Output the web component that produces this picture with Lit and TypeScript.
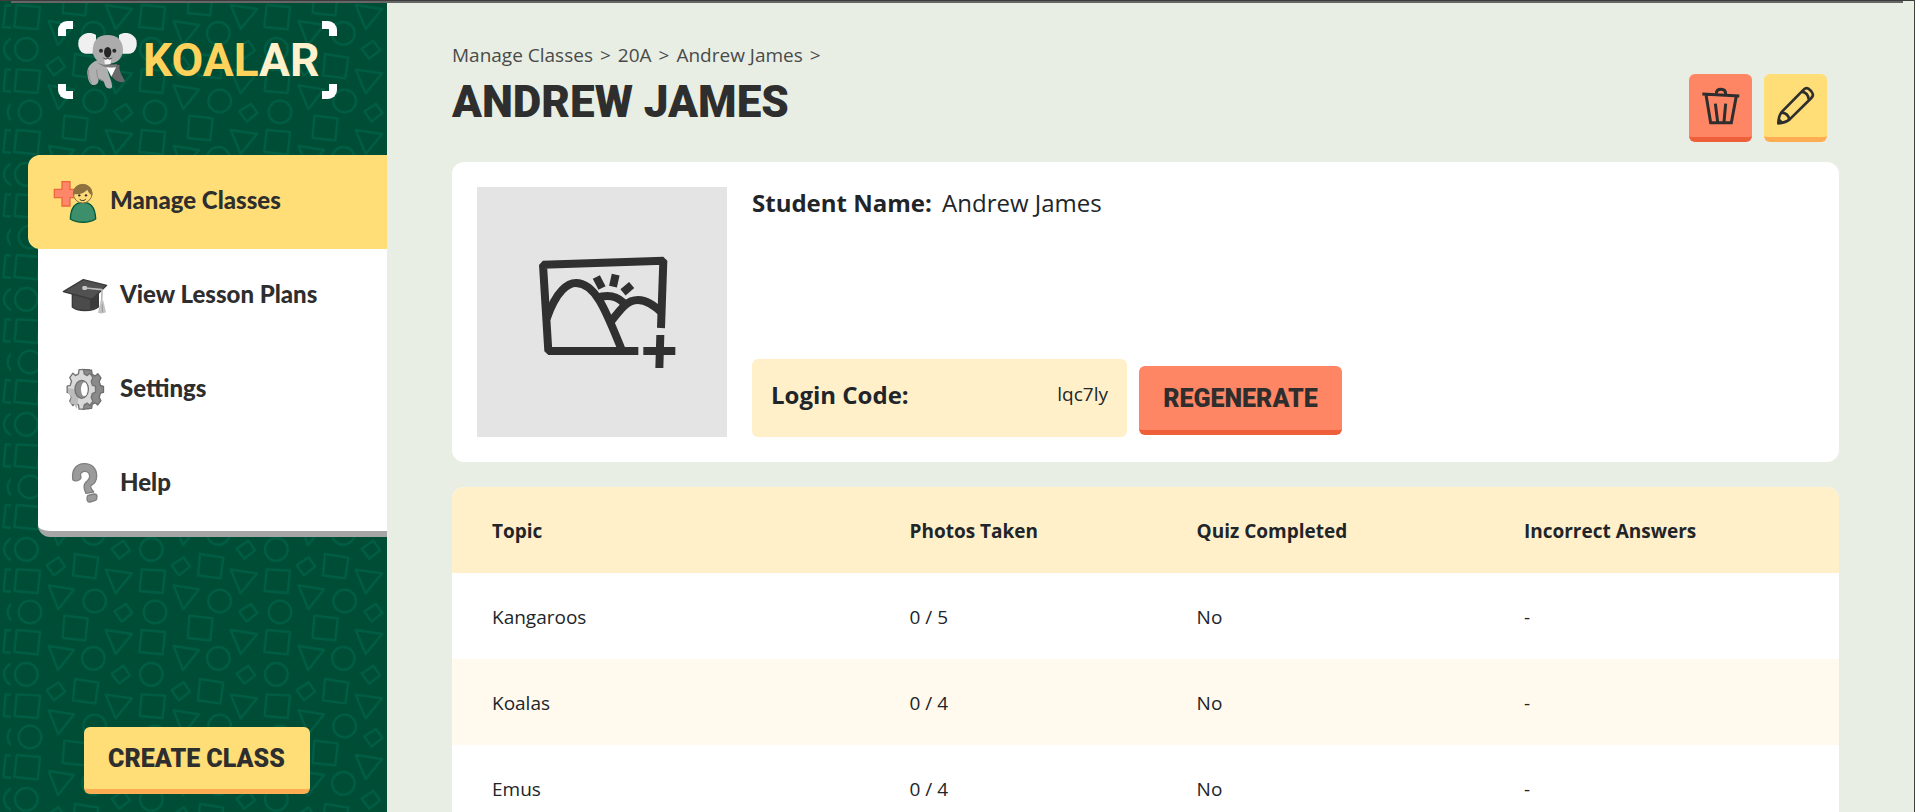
import { LitElement, html, css, svg } from "lit";
import { customElement, property } from "lit/decorators.js";
import { classMap } from "lit/directives/class-map.js";

const ink = "#2e2e2e";

/* Outline of a toothed wheel, squashed to an ellipse to suggest perspective. */
function gearPath(cx: number, cy: number, rx: number, ry: number, teeth = 8): string {
  const steps: [number, number][] = [
    [-0.2, 1],
    [0.2, 1],
    [0.32, 0.8],
    [0.68, 0.8],
  ];
  const points: string[] = [];
  for (let i = 0; i < teeth; i++) {
    for (const [offset, radius] of steps) {
      const angle = ((i + offset) / teeth) * Math.PI * 2;
      const x = cx + Math.sin(angle) * rx * radius;
      const y = cy - Math.cos(angle) * ry * radius;
      points.push(`${x.toFixed(1)} ${y.toFixed(1)}`);
    }
  }
  return `M${points.join("L")}Z`;
}

const classesIcon = svg`<svg class="icon" viewBox="0 0 180 180" aria-hidden="true">
  <path d="M42 35h24v23h26v25H66v25H42V83H19V58h23z" fill="#ff8769" stroke="#f0663f" stroke-width="4"/>
  <path d="M67 147C68 116 80 97 105 97s37 19 38 50c-20 13-56 13-76 0z" fill="#3d8f6b" stroke="#005a3c" stroke-width="4" stroke-linejoin="round"/>
  <circle cx="104" cy="71" r="28" fill="#ffdb78" stroke="#8f7140" stroke-width="3"/>
  <path d="M76 76C74 54 87 43 104 43s31 11 29 33c-7-3-12-8-15-17-9 9-23 15-34 14-4 0-6 1-8 3z" fill="#8f7140"/>
  <circle cx="94" cy="76" r="3.5" fill="${ink}"/><circle cx="114" cy="76" r="3.5" fill="${ink}"/>
  <path d="M95 88c5 5 13 5 18 0" fill="none" stroke="${ink}" stroke-width="3"/>
</svg>`;

const lessonsIcon = svg`<svg class="icon" viewBox="6 -18 180 180" aria-hidden="true">
  <path d="M49 72v39c14 14 62 14 78 0V72z" fill="#4b4b4b" stroke="#393939" stroke-width="4" stroke-linejoin="round"/>
  <path d="M102 87l24-8v31l-24 9z" fill="#3b3b3b"/>
  <path d="M22 65L82 29l70 17-43 42z" fill="#515151" stroke="#393939" stroke-width="4" stroke-linejoin="round"/>
  <path d="M88 54l50 5-1 38" fill="none" stroke="#b9b9b9" stroke-width="5" stroke-linejoin="round"/>
  <rect x="79" y="48" width="14" height="12" rx="4" fill="#c7c7c7"/>
  <path d="M134 92h8l8 35c-7 4-18 4-24 1z" fill="#c2c2c2"/>
  <path d="M139 103v24" stroke="#999" stroke-width="3"/>
</svg>`;

const settingsIcon = svg`<svg class="icon" viewBox="6 264 180 180" aria-hidden="true">
  <path d="${gearPath(100, 358, 43, 58)}" fill="#8a8a8a" stroke="#6d6d6d" stroke-width="4" stroke-linejoin="round"/>
  <path d="M78 298l24 2v116l-24 2z" fill="#8a8a8a"/>
  <path d="M78 298l24 2M78 418l24-2" stroke="#6d6d6d" stroke-width="4"/>
  <path d="${gearPath(76, 358, 43, 60)}" fill="#d9d9d9" stroke="#737373" stroke-width="4" stroke-linejoin="round"/>
  <path d="M70 359l-34-4v14l11 12-5 20 12 1 9 15z" fill="#bcbcbc"/>
  <ellipse cx="77" cy="358" rx="20" ry="27" fill="#8f8f8f" stroke="#707070" stroke-width="4"/>
  <ellipse cx="85" cy="358" rx="10" ry="21" fill="#fff"/>
</svg>`;

const helpIcon = svg`<svg class="icon" viewBox="6 546 180 180" aria-hidden="true">
  <g fill="#9b9b9b" stroke="#7f7f7f" stroke-width="4" stroke-linejoin="round">
    <path d="M50 627c-3-30 12-45 34-46 24-1 38 15 38 37 0 17-6 23-17 29-4 3 3 12 8 19l-23 4c-7-14-8-26 0-34 7-7 12-8 11-18-1-9-8-15-17-14-9 2-13 8-9 17 1 6-10 14-20 11-4-1-5-3-5-5z"/>
    <path d="M96 676l18-4c8 0 9 4 9 8s0 9-5 11l-16 5c-7 1-9-5-9-9s0-9 3-11z"/>
  </g>
</svg>`;

const koala = svg`<svg class="koala" viewBox="0 0 210 198" aria-hidden="true">
  <path d="M20 40C27 20 52 12 72 24v53c-18 5-35 5-44-2-9-10-11-22-8-35z" fill="#f0f0f0"/>
  <path d="M193 40c-7-20-32-28-52-16v53c18 5 35 5 44-2 9-10 11-22 8-35z" fill="#f0f0f0"/>
  <path d="M103 110l40 4c-4 16 8 34 16 48-10 8-26 4-40-14z" fill="#6a6a6a"/>
  <path d="M76 100c-26 10-33 28-29 46 2 16 8 29 20 28 11-1 14-10 12-20l16 9 5 14c4 9 18 10 20 3 1-14-8-30-12-46l-6-34z" fill="#afafaf"/>
  <path d="M74 128c2 14 0 22 6 28l15 7M50 128c-2 16 2 30 9 40" fill="none" stroke="#8c8c8c" stroke-width="3"/>
  <path d="M103 120l29 1-14 28z" fill="#fff"/>
  <path d="M74 106c20 10 41 12 62 4l-6 10c-20 4-38 1-56-14z" fill="#7c7c7c"/>
  <path d="M62 76C61 40 78 24 107 24s47 16 46 50c-5 23-20 36-46 36S66 98 62 76z" fill="#acacac"/>
  <path d="M97 96h20l-1 14c-5 3-12 3-18 0z" fill="#f4f4f4"/>
  <ellipse cx="107" cy="76" rx="11" ry="16" fill="#252525"/>
  <circle cx="87" cy="71" r="6" fill="#2a2a2a"/><circle cx="127" cy="71" r="6" fill="#2a2a2a"/>
  <path d="M94 92c4 6 10 6 13 1 3 5 9 5 13-1" fill="none" stroke="#333" stroke-width="3"/>
</svg>`;

const trashIcon = svg`<svg class="glyph" viewBox="302 256 120 120" aria-hidden="true">
  <g fill="none" stroke="${ink}" stroke-width="9">
    <path d="M306 280l111 6M317 282l14 84h62l15-80"/>
    <path d="M348 279c0-8 5-13 14-13s14 6 14 14M345 309l7 55M376 309l-5 55"/>
  </g>
</svg>`;

const pencilIcon = svg`<svg class="glyph" viewBox="527 256 120 120" aria-hidden="true">
  <g fill="none" stroke="${ink}" stroke-width="8" stroke-linejoin="round">
    <path d="M534 368c0-14 2-24 11-35l65-66c4-4 9-6 14-3 6 4 11 9 13 15 2 5 0 9-4 13l-65 64c-9 7-20 11-34 12z"/>
    <path d="M604 273c12 2 20 11 21 23M544 336c12 1 21 9 23 21"/>
    <path d="M536 356c6 1 9 5 10 10l-12 2z" fill="${ink}" stroke-width="3"/>
  </g>
</svg>`;

const pictureIcon = svg`<svg class="picture" viewBox="111 111 750 750" role="img" aria-label="Add student photo">
  <g fill="none" stroke="#303030" stroke-width="24">
    <path stroke-linejoin="bevel" d="M663 534L670 332 309 344 325 603H595"/>
    <path d="M320 506C350 420 385 399 408 399c60 0 92 90 137 200"/>
    <path d="M510 518c35-45 52-68 84-68 25 0 46 14 73 39M468 444c30-10 58-10 82 14"/>
    <path d="M469 381l17 33M527 374l-8 36M575 405l-26 22M661 555l-3 99M610 603h96"/>
  </g>
</svg>`;

interface NavItem {
  label: string;
  icon: unknown;
  active?: boolean;
}

const navItems: NavItem[] = [
  { label: "Manage Classes", icon: classesIcon, active: true },
  { label: "View Lesson Plans", icon: lessonsIcon },
  { label: "Settings", icon: settingsIcon },
  { label: "Help", icon: helpIcon },
];

interface TopicRow {
  topic: string;
  photos: string;
  quiz: string;
  incorrect: string;
}

const topicRows: TopicRow[] = [
  { topic: "Kangaroos", photos: "0 / 5", quiz: "No", incorrect: "-" },
  { topic: "Koalas", photos: "0 / 4", quiz: "No", incorrect: "-" },
  { topic: "Emus", photos: "0 / 4", quiz: "No", incorrect: "-" },
];

const buttonStyles = css`
  button {
    margin: 0;
    border: 0;
    border-radius: 6px;
    font: 900 25px/1 Roboto, sans-serif;
    color: #2e2e2e;
    cursor: pointer;
  }
  .yellow {
    background: #ffdd77;
    border-bottom: 5px solid #ffad52;
  }
  .coral {
    background: #ff8664;
    border-bottom: 5px solid #ed6039;
  }
`;

@customElement("koalar-sidebar")
export class KoalarSidebar extends LitElement {
  static styles = [
    buttonStyles,
    css`
      :host {
        --shapes: url("data:image/svg+xml,%3Csvg xmlns='http://www.w3.org/2000/svg' width='125' height='125' viewBox='0 0 375 375'%3E%3Cg fill='none' stroke='%23005d44' stroke-width='7' stroke-linejoin='round'%3E%3Ccircle cx='46' cy='28' r='34'/%3E%3Ccircle cx='46' cy='403' r='34'/%3E%3Ccircle cx='57' cy='216' r='34'/%3E%3Ccircle cx='251' cy='183' r='34'/%3E%3Ccircle cx='247' cy='355' r='34'/%3E%3Ccircle cx='247' cy='-20' r='34'/%3E%3Cpath d='M17 88l70 4-7 67-69-6zM17 270l70 6-7 67-70-7zM192 42l70 11-9 62-67-9zM160 227l70 8-7 66-68-7zM143 52l19 28-33 26-22-30zM337 2l20 29-32 25-23-30zM337 377l20 29-32 25-23-30zM345 192l19 27-32 26-22-31zM113 136l76 12-47 60zM113 318l76 12-48 60zM113-57l76 12-48 60zM284 89l79 11-49 60zM284 270l79 12-49 60z'/%3E%3C/g%3E%3C/svg%3E");
        position: relative;
        display: flex;
        flex-direction: column;
        box-sizing: border-box;
        width: 387px;
        padding: 20px 0 18px 28px;
        background: #004d35 var(--shapes) 11px 39px;
      }
      :host::before {
        content: "";
        position: absolute;
        inset: 0 auto 0 0;
        width: 11px;
        background: #004d35 var(--shapes) 0 39px;
      }
      .logo {
        position: relative;
        display: flex;
        align-items: center;
        box-sizing: border-box;
        width: 279px;
        height: 78px;
        margin: 0 0 56px 30px;
        padding-left: 14px;
        color: #ffd25c;
        font: 700 46px/78px Roboto, sans-serif;
        text-decoration: none;
      }
      .corner {
        position: absolute;
        width: 15px;
        height: 15px;
        box-sizing: border-box;
        border: 0 solid #fff;
      }
      .tl { top: 0; left: 0; border-width: 8px 0 0 8px; border-top-left-radius: 9px; }
      .tr { top: 0; right: 0; border-width: 8px 8px 0 0; border-top-right-radius: 9px; }
      .bl { bottom: 0; left: 0; border-width: 0 0 8px 8px; border-bottom-left-radius: 9px; }
      .br { bottom: 0; right: 0; border-width: 0 8px 8px 0; border-bottom-right-radius: 9px; }
      .koala {
        width: 70px;
        height: 66px;
        margin-right: 1px;
      }
      .light {
        color: #fff1cc;
      }
      .menu {
        margin-left: 10px;
        background: #fff;
        border-bottom: 6px solid #a6a6a6;
        border-bottom-left-radius: 12px;
      }
      .item {
        display: flex;
        align-items: center;
        gap: 2px;
        box-sizing: border-box;
        height: 94px;
        padding: 0 20px 4px;
        color: #2e2e2e;
        font: 900 24px/30px Lato, sans-serif;
        text-decoration: none;
      }
      .active {
        margin-left: -10px;
        background: #ffdd77;
        border-radius: 12px 0 0 12px;
      }
      .icon {
        width: 60px;
        height: 60px;
        flex: none;
      }
      .create {
        align-self: center;
        width: 226px;
        height: 67px;
        margin: auto 22px 0 0;
      }
    `,
  ];

  render() {
    return html`
      <a class="logo" href="#" aria-label="Koalar">
        <span class="corner tl"></span><span class="corner tr"></span>
        <span class="corner bl"></span><span class="corner br"></span>
        ${koala}<span>KOAL<span class="light">AR</span></span>
      </a>
      <nav class="menu">
        ${navItems.map(
          (item) => html`<a href="#" class=${classMap({ item: true, active: !!item.active })}>
            ${item.icon}<span>${item.label}</span>
          </a>`
        )}
      </nav>
      <button class="create yellow" type="button">CREATE CLASS</button>
    `;
  }
}

@customElement("student-card")
export class StudentCard extends LitElement {
  @property() name = "";
  @property() code = "";

  static styles = [
    buttonStyles,
    css`
      :host {
        display: flex;
        gap: 25px;
        padding: 25px;
        background: #fff;
        border-radius: 12px;
        color: #212529;
      }
      .picture {
        display: block;
        width: 250px;
        height: 250px;
        flex: none;
        background: #e4e4e4;
      }
      .details {
        flex: 1;
        display: flex;
        flex-direction: column;
        justify-content: space-between;
      }
      .name {
        margin: 0;
        font-size: 24px;
        line-height: 32px;
      }
      .name strong {
        margin-right: 4px;
      }
      .login {
        display: flex;
        align-items: flex-end;
        gap: 12px;
      }
      .code {
        display: flex;
        align-items: center;
        justify-content: space-between;
        box-sizing: border-box;
        width: 375px;
        height: 78px;
        padding: 0 19px 8px;
        background: #fff0ca;
        border-radius: 6px;
        font-size: 19px;
      }
      .code strong {
        font-size: 24px;
      }
      .regenerate {
        width: 203px;
        height: 69px;
        margin-bottom: 2px;
      }
    `,
  ];

  render() {
    return html`
      ${pictureIcon}
      <div class="details">
        <p class="name"><strong>Student Name:</strong> ${this.name}</p>
        <div class="login">
          <div class="code"><strong>Login Code:</strong><span>${this.code}</span></div>
          <button class="regenerate coral" type="button">REGENERATE</button>
        </div>
      </div>
    `;
  }
}

@customElement("app-root")
export class AppRoot extends LitElement {
  static styles = [
    buttonStyles,
    css`
      :host {
        position: relative;
        display: flex;
        box-sizing: border-box;
        height: 100vh;
        overflow: hidden;
        border-top: 1px solid #3c3c3c;
        border-right: 1px solid #3c4240;
        background: #e8eee3;
        color: #212529;
        font-family: "Open Sans", "Noto Sans", sans-serif;
      }
      .edge {
        position: absolute;
        top: 0;
        left: 11px;
        right: 11px;
        height: 2px;
        background: #666;
      }
      koalar-sidebar {
        flex: none;
      }
      main {
        flex: 1;
        display: flex;
        flex-direction: column;
        gap: 25px;
        min-width: 0;
        padding: 39px 75px 0 65px;
        overflow-y: auto;
        scrollbar-width: none;
      }
      .top {
        display: flex;
        justify-content: space-between;
        align-items: flex-end;
        margin-bottom: -5px;
      }
      .crumbs {
        display: flex;
        gap: 7px;
        color: #4a4a4a;
        font-size: 19px;
        line-height: 30px;
      }
      .crumbs a {
        color: inherit;
        text-decoration: none;
      }
      h1 {
        margin: 0 0 10px;
        padding-top: 2px;
        color: #2e2e2e;
        font: 900 44px/60px Roboto, sans-serif;
      }
      .actions {
        display: flex;
        gap: 12px;
        margin-right: 12px;
      }
      .square {
        display: grid;
        place-items: center;
        width: 63px;
        height: 68px;
        padding: 0;
      }
      .glyph {
        width: 40px;
        height: 40px;
      }
      student-card,
      table {
        flex: none;
      }
      table {
        width: 100%;
        table-layout: fixed;
        border-collapse: separate;
        border-spacing: 0;
        border-radius: 12px 12px 0 0;
        overflow: hidden;
        background: #fff;
        font-size: 19px;
      }
      th,
      td {
        box-sizing: border-box;
        height: 86px;
        padding: 2px 0 0 40px;
        text-align: left;
        vertical-align: middle;
      }
      th {
        background: #fff0ca;
        font-weight: 700;
      }
      .topic { width: 30.1%; }
      .photos { width: 20.7%; }
      .quiz { width: 23.6%; }
      tbody tr:nth-child(even) {
        background: #fffaed;
      }
    `,
  ];

  render() {
    return html`
      <koalar-sidebar></koalar-sidebar>
      <main>
        <header class="top">
          <div>
            <nav class="crumbs" aria-label="Breadcrumb">
              <a href="#">Manage Classes</a><span>&gt;</span><a href="#">20A</a><span>&gt;</span
              ><a href="#">Andrew James</a><span>&gt;</span>
            </nav>
            <h1>ANDREW JAMES</h1>
          </div>
          <div class="actions">
            <button class="square coral" type="button" aria-label="Delete student">${trashIcon}</button>
            <button class="square yellow" type="button" aria-label="Edit student">${pencilIcon}</button>
          </div>
        </header>
        <student-card name="Andrew James" code="lqc7ly"></student-card>
        <table>
          <thead>
            <tr>
              <th class="topic" scope="col">Topic</th>
              <th class="photos" scope="col">Photos Taken</th>
              <th class="quiz" scope="col">Quiz Completed</th>
              <th scope="col">Incorrect Answers</th>
            </tr>
          </thead>
          <tbody>
            ${topicRows.map(
              (row) => html`<tr>
                <td>${row.topic}</td>
                <td>${row.photos}</td>
                <td>${row.quiz}</td>
                <td>${row.incorrect}</td>
              </tr>`
            )}
          </tbody>
        </table>
      </main>
      <div class="edge"></div>
    `;
  }
}
